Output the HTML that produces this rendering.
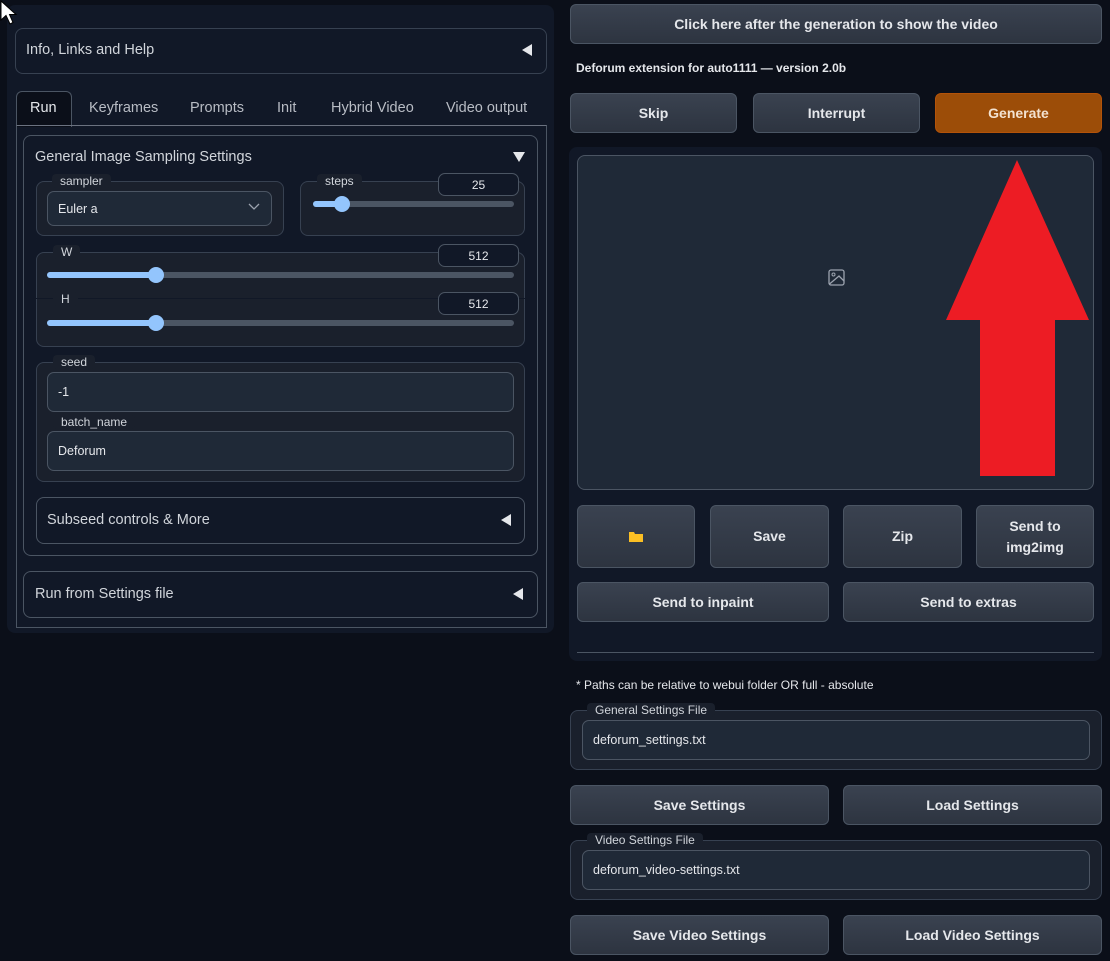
<!DOCTYPE html>
<html><head><meta charset="utf-8"><style>
*{box-sizing:border-box;margin:0;padding:0}
body{width:1110px;height:961px;background:#0b0f19;font-family:"Liberation Sans",sans-serif;color:#d1d5db;position:relative;overflow:hidden;font-size:14px}
.a{position:absolute}
.box{position:absolute;border:1px solid #374151;border-radius:8px}
.btn{position:absolute;border:1px solid #4b5563;border-radius:6px;background:linear-gradient(#3a4250,#2d3440);color:#e5e7eb;font-weight:bold;font-size:14px;display:flex;align-items:center;justify-content:center;text-align:center;line-height:1.45}
.inp{position:absolute;border:1px solid #4b5563;border-radius:7px;background:#1f2937;color:#e5e7eb;font-size:12.5px;display:flex;align-items:center;padding-left:10px}
.lbl{position:absolute;font-size:12px;color:#d1d5db;background:#1a202c;padding:0 8px;border-radius:4px}
.num{position:absolute;border:1px solid #4b5563;border-radius:7px;background:#111827;color:#e5e7eb;font-size:12px;display:flex;align-items:center;justify-content:center}
.track{position:absolute;height:6px;border-radius:3px;background:#4b5563}
.fill{position:absolute;height:6px;border-radius:3px;background:#93c5fd}
.thumb{position:absolute;width:16px;height:16px;border-radius:50%;background:#93c5fd}
.tri{position:absolute;width:0;height:0;border-top:6px solid transparent;border-bottom:6px solid transparent;border-right:10px solid #e5e7eb}
.t{font-size:14.5px}
</style></head><body>
<!-- left panel -->
<div class="a" style="left:7px;top:5px;width:547px;height:628px;background:#111827;border-radius:8px"></div>
<div class="box" style="left:15px;top:28px;width:532px;height:46px;background:#111827"></div>
<div class="a t" style="left:26px;top:42px">Info, Links and Help</div>
<div class="tri" style="left:522px;top:44px"></div>

<!-- tabs -->
<div class="a" style="left:16px;top:91px;width:56px;height:36px;border:1px solid #4b5563;border-bottom:none;border-radius:6px 6px 0 0;background:#0b0f19"></div>
<div class="a t" style="left:30px;top:100px;color:#e5e7eb">Run</div>
<div class="a t" style="left:89px;top:100px;color:#b8bcc4">Keyframes</div>
<div class="a t" style="left:190px;top:100px;color:#b8bcc4">Prompts</div>
<div class="a t" style="left:277px;top:100px;color:#b8bcc4">Init</div>
<div class="a t" style="left:331px;top:100px;color:#b8bcc4">Hybrid Video</div>
<div class="a t" style="left:446px;top:100px;color:#b8bcc4">Video output</div>
<div class="a" style="left:16px;top:125px;width:531px;height:503px;border:1px solid #4b5563;border-top-color:#6b7280"></div>

<!-- General accordion -->
<div class="box" style="left:23px;top:135px;width:515px;height:421px;background:#111827;border-color:#4b5563"></div>
<div class="a t" style="left:35px;top:149px">General Image Sampling Settings</div>
<div class="a" style="left:513px;top:152px;width:0;height:0;border-left:6px solid transparent;border-right:6px solid transparent;border-top:10px solid #e5e7eb"></div>

<!-- sampler -->
<div class="box" style="left:36px;top:181px;width:248px;height:55px;background:#1a202c"></div>
<div class="lbl" style="left:52px;top:174px">sampler</div>
<div class="inp" style="left:47px;top:191px;width:225px;height:35px;background:#1f2937">Euler a</div>
<svg class="a" style="left:248px;top:203px" width="12" height="8"><path d="M1 1 L6 6 L11 1" fill="none" stroke="#9ca3af" stroke-width="1.3"/></svg>

<!-- steps -->
<div class="box" style="left:300px;top:181px;width:225px;height:55px;background:#1a202c"></div>
<div class="lbl" style="left:317px;top:174px">steps</div>
<div class="num" style="left:438px;top:173px;width:81px;height:23px">25</div>
<div class="track" style="left:313px;top:201px;width:201px"></div>
<div class="fill" style="left:313px;top:201px;width:30px"></div>
<div class="thumb" style="left:334px;top:196px"></div>

<!-- W/H -->
<div class="box" style="left:36px;top:252px;width:489px;height:95px;background:#1a202c"></div>
<div class="lbl" style="left:53px;top:245px">W</div>
<div class="num" style="left:438px;top:244px;width:81px;height:23px">512</div>
<div class="track" style="left:47px;top:272px;width:467px"></div>
<div class="fill" style="left:47px;top:272px;width:110px"></div>
<div class="thumb" style="left:148px;top:267px"></div>
<div class="a" style="left:36px;top:298px;width:489px;height:1px;background:#111827"></div>
<div class="lbl" style="left:53px;top:292px">H</div>
<div class="num" style="left:438px;top:292px;width:81px;height:23px">512</div>
<div class="track" style="left:47px;top:320px;width:467px"></div>
<div class="fill" style="left:47px;top:320px;width:110px"></div>
<div class="thumb" style="left:148px;top:315px"></div>

<!-- seed / batch -->
<div class="box" style="left:36px;top:362px;width:489px;height:120px;background:#1a202c"></div>
<div class="lbl" style="left:53px;top:355px">seed</div>
<div class="inp" style="left:47px;top:372px;width:467px;height:40px">-1</div>
<div class="lbl" style="left:53px;top:415px">batch_name</div>
<div class="inp" style="left:47px;top:431px;width:467px;height:40px">Deforum</div>

<!-- subseed -->
<div class="box" style="left:36px;top:497px;width:489px;height:47px;background:#111827;border-color:#4b5563"></div>
<div class="a t" style="left:47px;top:512px">Subseed controls &amp; More</div>
<div class="tri" style="left:501px;top:514px"></div>

<!-- run from settings -->
<div class="box" style="left:23px;top:571px;width:515px;height:47px;background:#111827;border-color:#4b5563"></div>
<div class="a t" style="left:35px;top:586px">Run from Settings file</div>
<div class="tri" style="left:513px;top:588px"></div>

<!-- right -->
<div class="btn" style="left:570px;top:4px;width:532px;height:40px">Click here after the generation to show the video</div>
<div class="a" style="left:576px;top:61px;font-size:12px;font-weight:bold;color:#e5e7eb">Deforum extension for auto1111 — version 2.0b</div>
<div class="btn" style="left:570px;top:93px;width:167px;height:40px">Skip</div>
<div class="btn" style="left:753px;top:93px;width:167px;height:40px">Interrupt</div>
<div class="btn" style="left:935px;top:93px;width:167px;height:40px;background:#9c4d08;border-color:#b45309;color:#f3e2d0">Generate</div>

<div class="a" style="left:569px;top:147px;width:533px;height:514px;background:#111827;border-radius:8px"></div>
<div class="box" style="left:577px;top:155px;width:517px;height:335px;background:#1f2937;border-color:#4b5563"></div>
<svg class="a" style="left:828px;top:269px" width="17" height="17" viewBox="0 0 17 17"><rect x="1" y="1" width="15" height="15" rx="2" fill="none" stroke="#9ca3af" stroke-width="1.3"/><circle cx="5.5" cy="5.5" r="1.5" fill="none" stroke="#9ca3af"/><path d="M1.5 15 L11 7 L16 12" fill="none" stroke="#9ca3af" stroke-width="1.3"/></svg>
<svg class="a" style="left:940px;top:155px" width="155" height="325"><path d="M77 5 L149 165 L115 165 L115 321 L40 321 L40 165 L6 165 Z" fill="#ed1c24"/></svg>

<div class="btn" style="left:577px;top:505px;width:118px;height:63px"><svg width="16" height="13" viewBox="0 0 16 13"><path d="M1 2 L6 2 L7 4 L15 4 L15 12 L1 12 Z" fill="#fbbf24"/></svg></div>
<div class="btn" style="left:710px;top:505px;width:119px;height:63px">Save</div>
<div class="btn" style="left:843px;top:505px;width:119px;height:63px">Zip</div>
<div class="btn" style="left:976px;top:505px;width:118px;height:63px">Send to<br>img2img</div>
<div class="btn" style="left:577px;top:582px;width:252px;height:40px">Send to inpaint</div>
<div class="btn" style="left:843px;top:582px;width:251px;height:40px">Send to extras</div>
<div class="a" style="left:577px;top:652px;width:517px;height:1px;background:#4b5563"></div>

<div class="a" style="left:576px;top:678px;font-size:12px;color:#e5e7eb">* Paths can be relative to webui folder OR full - absolute</div>

<div class="box" style="left:570px;top:710px;width:532px;height:60px;background:#1a202c"></div>
<div class="lbl" style="left:587px;top:703px">General Settings File</div>
<div class="inp" style="left:582px;top:720px;width:508px;height:40px">deforum_settings.txt</div>
<div class="btn" style="left:570px;top:785px;width:259px;height:40px">Save Settings</div>
<div class="btn" style="left:843px;top:785px;width:259px;height:40px">Load Settings</div>

<div class="box" style="left:570px;top:840px;width:532px;height:60px;background:#1a202c"></div>
<div class="lbl" style="left:587px;top:833px">Video Settings File</div>
<div class="inp" style="left:582px;top:850px;width:508px;height:40px">deforum_video-settings.txt</div>
<div class="btn" style="left:570px;top:915px;width:259px;height:40px">Save Video Settings</div>
<div class="btn" style="left:843px;top:915px;width:259px;height:40px">Load Video Settings</div>

<!-- cursor (on top) -->
<svg class="a" style="left:0;top:0" width="20" height="26"><path d="M1 1 L1 20 L6 15.5 L10 24 L13 22.5 L9.5 14.5 L16 14.5 Z" fill="#fff" stroke="#000" stroke-width="1"/></svg>
</body></html>
